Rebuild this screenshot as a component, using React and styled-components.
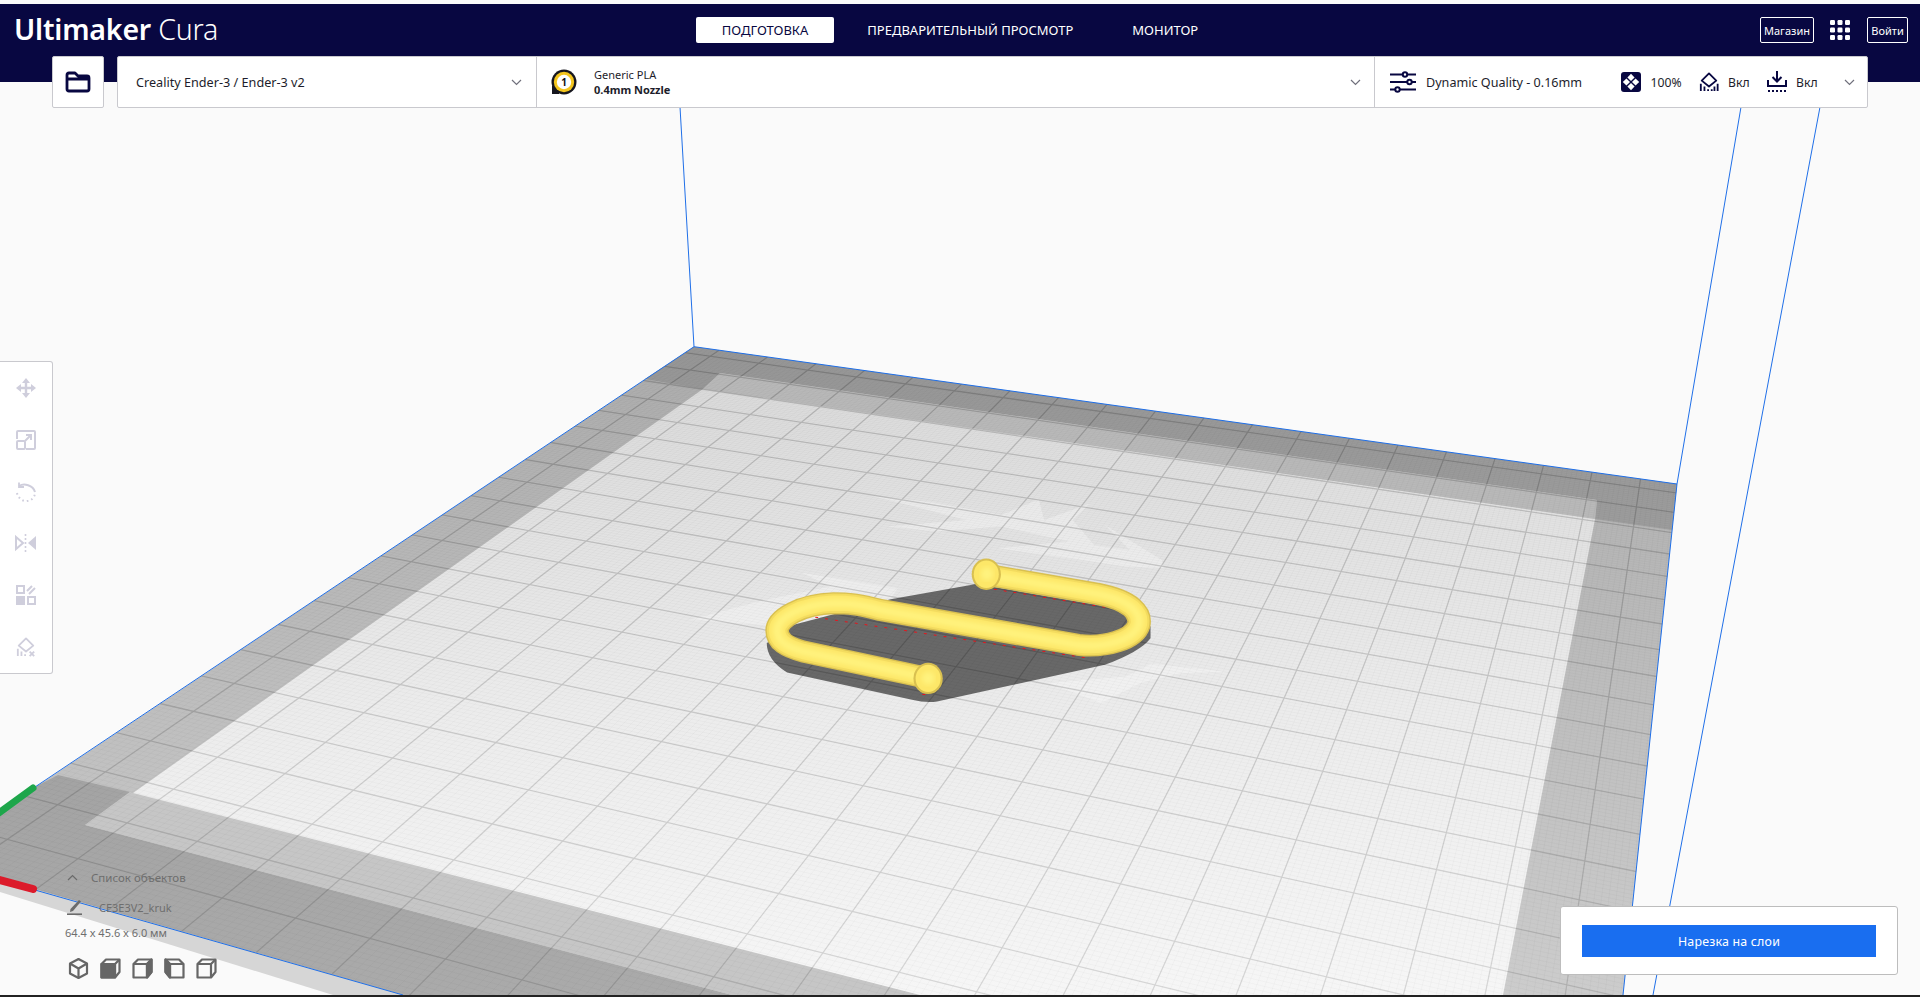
import React, { useMemo } from 'react'
import styled, { createGlobalStyle } from 'styled-components'

const NAVY = '#080741'
const BLUE = '#1f6fe8'
const FONT = '"Noto Sans", "Open Sans", sans-serif'

const tabs = [
  { label: 'Подготовка', active: true },
  { label: 'Предварительный просмотр' },
  { label: 'Монитор' },
]

// plate edges and vanishing points, read off the screenshot
const CORNER_L = [694, 346.7]
const CORNER_R = [1677, 484]
const FRONT_A = [35, 890]
const FRONT_B = [403, 994]
const RIGHT_END = [1623, 995]
const VP_DEPTH = [1764, -368]
const VP_WIDTH = [-4413, -368]

const intersect = (p1, p2, q1, q2) => {
  const d1x = p2[0] - p1[0]
  const d1y = p2[1] - p1[1]
  const d2x = q2[0] - q1[0]
  const d2y = q2[1] - q1[1]
  const t = ((q1[0] - p1[0]) * d2y - (q1[1] - p1[1]) * d2x) / (d1x * d2y - d1y * d2x)
  return [p1[0] + t * d1x, p1[1] + t * d1y]
}

const seg = (p, q) => `M${p[0].toFixed(1)} ${p[1].toFixed(1)}L${q[0].toFixed(1)} ${q[1].toFixed(1)}`

const backEdgeY = (x) => CORNER_L[1] + 0.1397 * (x - CORNER_L[0])

// x on the left edge for a line counted in cells from the back
const leftEdgePoint = (k) => {
  const x = (694 - 31.7 * k) / (1 - 0.0172 * k)
  return [x, CORNER_L[1] - 0.668 * (x - CORNER_L[0])]
}

const gridPath = (cells) => {
  let d = ''
  for (let c = cells.firstU; c < 20; c += cells.step) {
    const x = 719 + 48.5 * c
    if (x <= CORNER_L[0] || x >= CORNER_R[0]) continue
    const top = [x, backEdgeY(x)]
    d += seg(top, intersect(top, VP_DEPTH, FRONT_A, FRONT_B))
  }
  for (let k = cells.firstV; k < 23.27; k += cells.step) {
    const start = leftEdgePoint(k)
    d += seg(start, intersect(start, VP_WIDTH, CORNER_R, RIGHT_END))
  }
  return d
}

const Viewport = () => {
  const { major, minor } = useMemo(() => ({
    major: gridPath({ firstU: 0, firstV: 0.45, step: 1 }),
    minor: gridPath({ firstU: -0.5, firstV: 0.05, step: 0.1 }),
  }), [])
  const tube = 'M862 315 L1170 372 C1265 392 1292 430 1285 465 C1272 510 1190 535 1115 525 L560 420 C500 402 470 400 430 400 C340 403 272 445 272 482 C272 515 300 532 345 545 L695 625'

  return (
    <Scene viewBox="0 82 1920 913" preserveAspectRatio="none">
      <defs>
        <linearGradient id="darkBand" gradientUnits="userSpaceOnUse" x1="0" y1="346" x2="0" y2="995">
          <stop offset="0" stopColor="#979797" />
          <stop offset="1" stopColor="#aaaaaa" />
        </linearGradient>
        <linearGradient id="midBand" gradientUnits="userSpaceOnUse" x1="0" y1="370" x2="0" y2="995">
          <stop offset="0" stopColor="#aeaeae" />
          <stop offset="1" stopColor="#cccccc" />
        </linearGradient>
        <linearGradient id="lightBand" gradientUnits="userSpaceOnUse" x1="0" y1="370" x2="0" y2="995">
          <stop offset="0" stopColor="#dadada" />
          <stop offset="0.55" stopColor="#ececec" />
          <stop offset="1" stopColor="#f6f6f6" />
        </linearGradient>
        <linearGradient id="gridStroke" gradientUnits="userSpaceOnUse" x1="0" y1="346" x2="0" y2="995">
          <stop offset="0" stopColor="#000" stopOpacity="0.17" />
          <stop offset="1" stopColor="#000" stopOpacity="0.11" />
        </linearGradient>
        <filter id="tubeBlur">
          <feGaussianBlur stdDeviation="8" />
        </filter>
      </defs>

      {/* strip under the front edge */}
      <polygon points="0,879 403,995 333,995 0,892" fill="#d6d6d6" />
      {/* plate */}
      <polygon points="694,346.7 1677,484 1623,995 403,995 0,879 0,811" fill="url(#midBand)" />
      {/* back band, with the notch of the clip area */}
      <polygon points="694,346.7 1677,484 1672,530 1595,519 1597,500 720,373 703,389 645,379" fill="url(#darkBand)" />
      {/* front band */}
      <polygon points="58,775 130,792 85,825 732,995 403,995 0,879 0,811 35,787" fill="url(#darkBand)" />
      {/* inner strip */}
      <polygon points="720,373 1597,500 1595,519 703,389" fill="#b9b9b9" />
      <polygon points="130,792 920,995 732,995 85,825" fill="#c6c6c6" />
      {/* printable area */}
      <polygon points="703,389 1595,519 1503,995 920,995 133,793" fill="url(#lightBand)" />

      {/* ghost of the previous print on the bed */}
      <g transform="translate(680 470) scale(0.357 0.333)" fill="#ffffff" fillOpacity="0.3">
        <path d="M535 78 L700 95 L900 135 L1005 88 L1020 150 L1150 100 L1100 150 L1160 225 L1260 240 L1190 165 L1350 270 L1355 295 L1250 290 L890 235 L1090 215 L900 170 L720 185 L580 170 L800 150 L640 105 Z" />
        <path d="M340 308 L610 355 L590 385 L300 470 L30 450 L220 395 L420 350 Z" />
        <path d="M1320 582 L1530 606 L1400 610 L1290 640 L1180 700 L1030 640 L1250 620 Z" />
      </g>

      {/* shadow of the model */}
      <path
        transform="translate(680 470) scale(0.357 0.333)"
        d="M590 388 L830 342 L1250 420 L1318 470 L1318 505 Q1290 545 1190 585 L720 695 Q690 700 650 690 L300 608 Q243 570 243 520 L300 470 Z"
        fill="#686868"
      />

      <path d={minor} stroke="#000" strokeOpacity="0.035" strokeWidth="0.7" fill="none" />
      <path d={major} stroke="url(#gridStroke)" strokeWidth="1.3" fill="none" />

      {/* model */}
      <g transform="translate(680 470) scale(0.357 0.333)" fill="none" strokeLinecap="round" strokeLinejoin="round">
        <path
          d="M880 358 L1190 412 M380 442 L1150 566 M680 674 L700 674"
          stroke="#e8141c"
          strokeWidth="3"
          strokeDasharray="6 22"
        />
        <path d={tube} stroke="#d9c050" strokeWidth="66" />
        <path d={tube} stroke="#f3db5e" strokeWidth="58" />
        <path d={tube} stroke="#fde768" strokeWidth="46" />
        <path d={tube} stroke="#fff37e" strokeWidth="24" filter="url(#tubeBlur)" />
        <ellipse cx="858" cy="313" rx="41" ry="47" fill="#d9c050" />
        <ellipse cx="858" cy="313" rx="35" ry="41" fill="#fde768" />
        <ellipse cx="860" cy="312" rx="18" ry="20" fill="#fff37e" filter="url(#tubeBlur)" />
        <ellipse cx="695" cy="626" rx="41" ry="47" fill="#d9c050" />
        <ellipse cx="695" cy="626" rx="35" ry="41" fill="#fde768" />
        <ellipse cx="695" cy="625" rx="18" ry="20" fill="#fff37e" filter="url(#tubeBlur)" />
      </g>

      {/* build volume */}
      <g stroke={BLUE} strokeWidth="1" fill="none">
        <path d="M680 107 L694 346.7 L1677 484 L1741 107" />
        <path d="M694 346.7 L35 787" />
        <path d="M1677 484 L1623 995" />
        <path d="M1820 107 L1653 995" />
        <path d="M35 890 L403 995" />
      </g>
      <path d="M-4 815 L33 788" stroke="#1ea64b" strokeWidth="7" strokeLinecap="round" />
      <path d="M-4 879 L33 889" stroke="#dc1b2b" strokeWidth="8" strokeLinecap="round" />
    </Scene>
  )
}

const FolderIcon = () => (
  <svg width="26" height="22" viewBox="0 0 26 22" fill="none">
    <path d="M2 4 Q2 2 4 2 H10 L13 5 H22 Q24 5 24 7 V18 Q24 20 22 20 H4 Q2 20 2 18 Z M2 8 H24" stroke={NAVY} strokeWidth="2.8" strokeLinejoin="round" />
  </svg>
)

const AppsIcon = () => (
  <svg width="20" height="20" viewBox="0 0 20 20" fill="#fff">
    {[0, 7.5, 15].map((y) => [0, 7.5, 15].map((x) => (
      <rect key={`${x}-${y}`} x={x} y={y} width="5" height="5" rx="1.2" />
    )))}
  </svg>
)

const Chevron = ({ up, color = '#70707c' }) => (
  <svg width="11" height="7" viewBox="0 0 11 7" fill="none">
    <path d={up ? 'M1 6 L5.5 1.5 L10 6' : 'M1 1 L5.5 5.5 L10 1'} stroke={color} strokeWidth="1.2" />
  </svg>
)

const ExtruderIcon = () => (
  <ExtruderBadge>
    <svg width="26" height="26" viewBox="0 0 26 26">
      <rect x="1" y="17" width="7" height="8" fill="#16161e" />
      <circle cx="13" cy="13" r="12.5" fill="#16161e" />
      <circle cx="13" cy="13" r="10.2" fill="#f4c61f" />
      <circle cx="13" cy="13" r="7.2" fill="#fff" />
    </svg>
    <ExtruderNumber>1</ExtruderNumber>
  </ExtruderBadge>
)

const QualityIcon = () => (
  <svg width="26" height="22" viewBox="0 0 26 22" fill="none" stroke={NAVY} strokeWidth="2">
    <path d="M0 3.5 H13 M18 3.5 H26 M0 11 H17 M22 11 H26 M0 18.5 H5 M10 18.5 H26" />
    <circle cx="15" cy="3.5" r="2.2" />
    <circle cx="19.5" cy="11" r="2.2" />
    <circle cx="7.5" cy="18.5" r="2.2" />
  </svg>
)

const InfillIcon = () => (
  <svg width="20" height="20" viewBox="0 0 20 20">
    <rect width="20" height="20" rx="3" fill={NAVY} />
    <g fill="#fff">
      <path d="M10 1.8 L13.6 5.4 L10 9 L6.4 5.4 Z" />
      <path d="M10 11 L13.6 14.6 L10 18.2 L6.4 14.6 Z" />
      <path d="M5.4 6.4 L9 10 L5.4 13.6 L1.8 10 Z" />
      <path d="M14.6 6.4 L18.2 10 L14.6 13.6 L11 10 Z" />
    </g>
  </svg>
)

const SupportIcon = ({ color = NAVY, cross }) => (
  <svg width="20" height="22" viewBox="0 0 22 22" fill="none">
    <path d="M11 1.5 L19 9.5 L11 16 L3 9.5 Z" stroke={color} strokeWidth="2" strokeLinejoin="round" />
    <path d="M2 13 V21 M6 16 V21 M10 19 V21" stroke={color} strokeWidth="2" />
    {cross ? (
      <path d="M15 16 L20 21 M20 16 L15 21" stroke={color} strokeWidth="2" />
    ) : (
      <path d="M14 19 V21 M17 16 V21 M20.5 13 V21" stroke={color} strokeWidth="2" />
    )}
  </svg>
)

const AdhesionIcon = () => (
  <svg width="20" height="22" viewBox="0 0 20 22" fill="none" stroke={NAVY} strokeWidth="2">
    <path d="M10 0 V10 M5.5 6 L10 10.5 L14.5 6" />
    <path d="M1 9 V15 H19 V9" />
    <path d="M1 20 H19" strokeDasharray="2 2" />
  </svg>
)

const toolColor = '#cfcedc'

const MoveIcon = () => (
  <svg width="20" height="20" viewBox="0 0 20 20" fill={toolColor}>
    <path d="M10 0 L14 5 H6 Z M10 20 L6 15 H14 Z M0 10 L5 6 V14 Z M20 10 L15 14 V6 Z" />
    <path d="M10 3 V17 M3 10 H17" stroke={toolColor} strokeWidth="2.4" />
  </svg>
)

const ScaleIcon = () => (
  <svg width="20" height="20" viewBox="0 0 20 20" fill="none" stroke={toolColor} strokeWidth="2">
    <path d="M1 9 V2 Q1 1 2 1 H18 Q19 1 19 2 V18 Q19 19 18 19 H10" />
    <rect x="1" y="11" width="8" height="8" rx="1" />
    <path d="M9 11 L15 5 M10 5 H15 V10" />
  </svg>
)

const RotateIcon = () => (
  <svg width="20" height="20" viewBox="0 0 20 20" fill="none" stroke={toolColor} strokeWidth="2">
    <path d="M3 4 C8 1 17 3 19 10" />
    <path d="M3 0.5 V5 H8" strokeWidth="1.8" />
    <path d="M1 11 C2 16 7 20 11 19 C15 19 18 16 19 12" strokeDasharray="1.6 3" />
  </svg>
)

const MirrorIcon = () => (
  <svg width="22" height="20" viewBox="0 0 22 20">
    <path d="M1 4 L8 10 L1 16 Z" fill="none" stroke={toolColor} strokeWidth="2" />
    <path d="M21 3 V17 L13 10 Z" fill={toolColor} />
    <path d="M10.5 1 V19" stroke={toolColor} strokeWidth="1.6" strokeDasharray="2 2" />
  </svg>
)

const PerModelIcon = () => (
  <svg width="20" height="20" viewBox="0 0 20 20" fill="none" stroke={toolColor} strokeWidth="2">
    <rect x="1" y="1" width="7" height="7" />
    <path d="M11 6 L16 1 M13 9 L19 3" />
    <rect x="0" y="11" width="9" height="9" fill={toolColor} stroke="none" />
    <rect x="12" y="12" width="7" height="7" />
  </svg>
)

const PencilIcon = () => (
  <svg width="15" height="15" viewBox="0 0 15 15" fill="#6b6b6b">
    <path d="M12 0 L14 1.5 L6 11 L3 12 L3.5 9 Z" />
    <rect x="0" y="13.4" width="15" height="1.6" />
  </svg>
)

const ViewIcon = ({ shade, mirror }) => (
  <svg width="21" height="21" viewBox="0 0 21 21" fill="none" stroke="#666" strokeWidth="2.2" strokeLinejoin="round">
    {shade === 'iso' ? (
      <>
        <path d="M10.5 1 L19 5.5 V15.5 L10.5 20 L2 15.5 V5.5 Z" />
        <path d="M2 5.5 L10.5 10.5 L19 5.5 M10.5 10.5 V20" />
      </>
    ) : (
      <g transform={mirror ? 'matrix(-1 0 0 1 21 0)' : undefined}>
        <path d="M6 1.5 H19.5 V14 L15 19.5 H1.5 V6 Z" />
        <path d="M1.5 6 H15 V19.5 M15 6 L19.5 1.5" />
        {shade === 'front' && <path d="M1.5 6 H15 V19.5 H1.5 Z" fill="#666" />}
        {shade === 'right' && <path d="M15 6 L19.5 1.5 V14 L15 19.5 Z" fill="#666" />}
      </g>
    )}
  </svg>
)

const App = () => {
  return (
    <Page>
      <GlobalStyle />
      <Header>
        <Logo>
          Ultimaker <LogoLight>Cura</LogoLight>
        </Logo>
        <Tabs>
          {tabs.map((tab) => (
            <Tab key={tab.label} $active={tab.active}>{tab.label}</Tab>
          ))}
        </Tabs>
        <HeaderActions>
          <OutlineButton $width={54}>Магазин</OutlineButton>
          <AppsButton><AppsIcon /></AppsButton>
          <OutlineButton $width={41}>Войти</OutlineButton>
        </HeaderActions>
      </Header>

      <Stage>
        <Viewport />

        <Toolbar>
          <FolderButton><FolderIcon /></FolderButton>
          <MainBar>
            <PrinterSection>
              <span>Creality Ender-3 / Ender-3 v2</span>
              <Chevron />
            </PrinterSection>
            <MaterialSection>
              <ExtruderIcon />
              <MaterialText>
                <span>Generic PLA</span>
                <NozzleName>0.4mm Nozzle</NozzleName>
              </MaterialText>
              <SectionEnd><Chevron /></SectionEnd>
            </MaterialSection>
            <SettingsSection>
              <QualityIcon />
              <QualityName>Dynamic Quality - 0.16mm</QualityName>
              <Setting $left={39}><InfillIcon /><span>100%</span></Setting>
              <Setting $left={17}><SupportIcon /><span>Вкл</span></Setting>
              <Setting $left={17}><AdhesionIcon /><span>Вкл</span></Setting>
              <SectionEnd><Chevron /></SectionEnd>
            </SettingsSection>
          </MainBar>
        </Toolbar>

        <ToolPanel>
          <ToolButton><MoveIcon /></ToolButton>
          <ToolButton><ScaleIcon /></ToolButton>
          <ToolButton><RotateIcon /></ToolButton>
          <ToolButton><MirrorIcon /></ToolButton>
          <ToolButton><PerModelIcon /></ToolButton>
          <ToolButton><SupportIcon color={toolColor} cross /></ToolButton>
        </ToolPanel>

        <BottomRow>
          <ObjectPanel>
            <ObjectHeading>
              <Chevron up color="#6b6b6b" />
              <span>Список объектов</span>
            </ObjectHeading>
            <ObjectName>
              <PencilIcon />
              <span>CE3E3V2_kruk</span>
            </ObjectName>
            <ObjectSize>64.4 x 45.6 x 6.0 мм</ObjectSize>
            <ViewButtons>
              <ViewIcon shade="iso" />
              <ViewIcon shade="front" />
              <ViewIcon shade="right" />
              <ViewIcon shade="right" mirror />
              <ViewIcon shade="plain" />
            </ViewButtons>
          </ObjectPanel>
          <SlicePanel>
            <SliceButton>Нарезка на слои</SliceButton>
          </SlicePanel>
        </BottomRow>
      </Stage>
      <BottomEdge />
    </Page>
  )
}

export default App

const GlobalStyle = createGlobalStyle`
  html, body {
    margin: 0;
    padding: 0;
    background: #fafafa;
    font-family: ${FONT};
  }
  * {
    box-sizing: border-box;
  }
`

const Page = styled.div`
  width: 1920px;
  height: 997px;
  padding-top: 4px;
  display: flex;
  flex-direction: column;
  background: #fafafa;
  overflow: hidden;
`

const Header = styled.header`
  height: 78px;
  flex: none;
  position: relative;
  display: flex;
  align-items: flex-start;
  justify-content: space-between;
  background: ${NAVY};
  color: #fff;
`

const Logo = styled.div`
  width: 300px;
  padding: 5px 0 0 14px;
  font-size: 28.5px;
  line-height: 40px;
  font-weight: 600;
  letter-spacing: -0.2px;
  white-space: pre;
`

const LogoLight = styled.span`
  font-weight: 300;
`

const Tabs = styled.nav`
  margin-top: 13px;
  display: flex;
  gap: 7px;
`

const Tab = styled.div`
  height: 26px;
  padding: 0 26px;
  display: flex;
  align-items: center;
  border-radius: 2px;
  font-size: 13px;
  text-transform: uppercase;
  color: ${({ $active }) => ($active ? NAVY : '#fff')};
  background: ${({ $active }) => ($active ? '#fff' : 'transparent')};
`

const HeaderActions = styled.div`
  width: 300px;
  margin-top: 13px;
  padding-right: 12px;
  display: flex;
  justify-content: flex-end;
  align-items: center;
`

const OutlineButton = styled.div`
  width: ${({ $width }) => $width}px;
  height: 26px;
  display: flex;
  align-items: center;
  justify-content: center;
  border: 1px solid #fff;
  border-radius: 2px;
  font-size: 11px;
`

const AppsButton = styled.div`
  margin: 0 17px 0 16px;
  display: flex;
`

const Stage = styled.main`
  flex: 1;
  min-height: 0;
  position: relative;
  display: flex;
  flex-direction: column;
`

const Scene = styled.svg`
  position: absolute;
  inset: 0;
  width: 100%;
  height: 100%;
`

const Toolbar = styled.div`
  position: relative;
  height: 52px;
  margin-top: -26px;
  padding: 0 52px;
  display: flex;
  gap: 13px;
  color: #1d1d2b;
  font-size: 12.2px;
`

const Panel = styled.div`
  background: #fff;
  border: 1px solid #c9c9ce;
  border-radius: 2px;
`

const FolderButton = styled(Panel)`
  width: 52px;
  display: flex;
  align-items: center;
  justify-content: center;
`

const MainBar = styled(Panel)`
  width: 1751px;
  display: flex;
`

const PrinterSection = styled.div`
  width: 419px;
  padding: 0 14px 0 18px;
  display: flex;
  align-items: center;
  justify-content: space-between;
  border-right: 1px solid #c9c9ce;
  font-size: 12.65px;
`

const MaterialSection = styled.div`
  width: 838px;
  padding: 0 13px 0 14px;
  display: flex;
  align-items: center;
  border-right: 1px solid #c9c9ce;
`

const ExtruderBadge = styled.div`
  position: relative;
  width: 26px;
  height: 26px;
  margin-right: 17px;
`

const ExtruderNumber = styled.span`
  position: absolute;
  inset: 0;
  display: flex;
  align-items: center;
  justify-content: center;
  font-size: 10px;
  font-weight: 700;
  color: #111;
`

const MaterialText = styled.div`
  display: flex;
  flex-direction: column;
  font-size: 11px;
  line-height: 15px;
`

const NozzleName = styled.span`
  font-weight: 700;
`

const SectionEnd = styled.div`
  margin-left: auto;
  display: flex;
`

const SettingsSection = styled.div`
  flex: 1;
  padding: 0 12px 0 15px;
  display: flex;
  align-items: center;
`

const QualityName = styled.span`
  width: 156px;
  margin-left: 10px;
  font-size: 12.6px;
  white-space: nowrap;
`

const Setting = styled.div`
  margin-left: ${({ $left }) => $left}px;
  display: flex;
  align-items: center;
  gap: 9.5px;
`

const ToolPanel = styled(Panel)`
  position: relative;
  width: 53px;
  height: 313px;
  margin-top: 253px;
  border-left: none;
  border-radius: 0 3px 3px 0;
  display: flex;
  flex-direction: column;
  justify-content: center;
`

const ToolButton = styled.div`
  height: 51.8px;
  display: flex;
  align-items: center;
  justify-content: center;
`

const BottomRow = styled.div`
  position: relative;
  margin-top: auto;
  padding: 0 22px 20px 65px;
  display: flex;
  align-items: flex-end;
  justify-content: space-between;
`

const ObjectPanel = styled.div`
  margin-bottom: -4px;
  display: flex;
  flex-direction: column;
  color: #6e6e6e;
  font-size: 11px;
`

const ObjectHeading = styled.div`
  height: 16px;
  padding-left: 2px;
  display: flex;
  align-items: center;
  gap: 13px;
  font-size: 11.5px;
`

const ObjectName = styled.div`
  margin-top: 14px;
  height: 16px;
  padding-left: 2px;
  display: flex;
  align-items: center;
  gap: 17px;
  font-size: 11px;
`

const ObjectSize = styled.div`
  margin-top: 10px;
  height: 16px;
  font-size: 11px;
  line-height: 16px;
`

const ViewButtons = styled.div`
  margin-top: 17px;
  padding-left: 3px;
  display: flex;
  gap: 11px;
`

const SlicePanel = styled(Panel)`
  width: 338px;
  height: 69px;
  padding: 18px 21px;
  border-color: #bdbdbd;
  border-radius: 3px;
`

const SliceButton = styled.div`
  height: 32px;
  display: flex;
  align-items: center;
  justify-content: center;
  background: #196ef0;
  color: #fff;
  font-size: 12.4px;
  letter-spacing: 0.2px;
`

const BottomEdge = styled.div`
  height: 2px;
  flex: none;
  background: #222;
`
